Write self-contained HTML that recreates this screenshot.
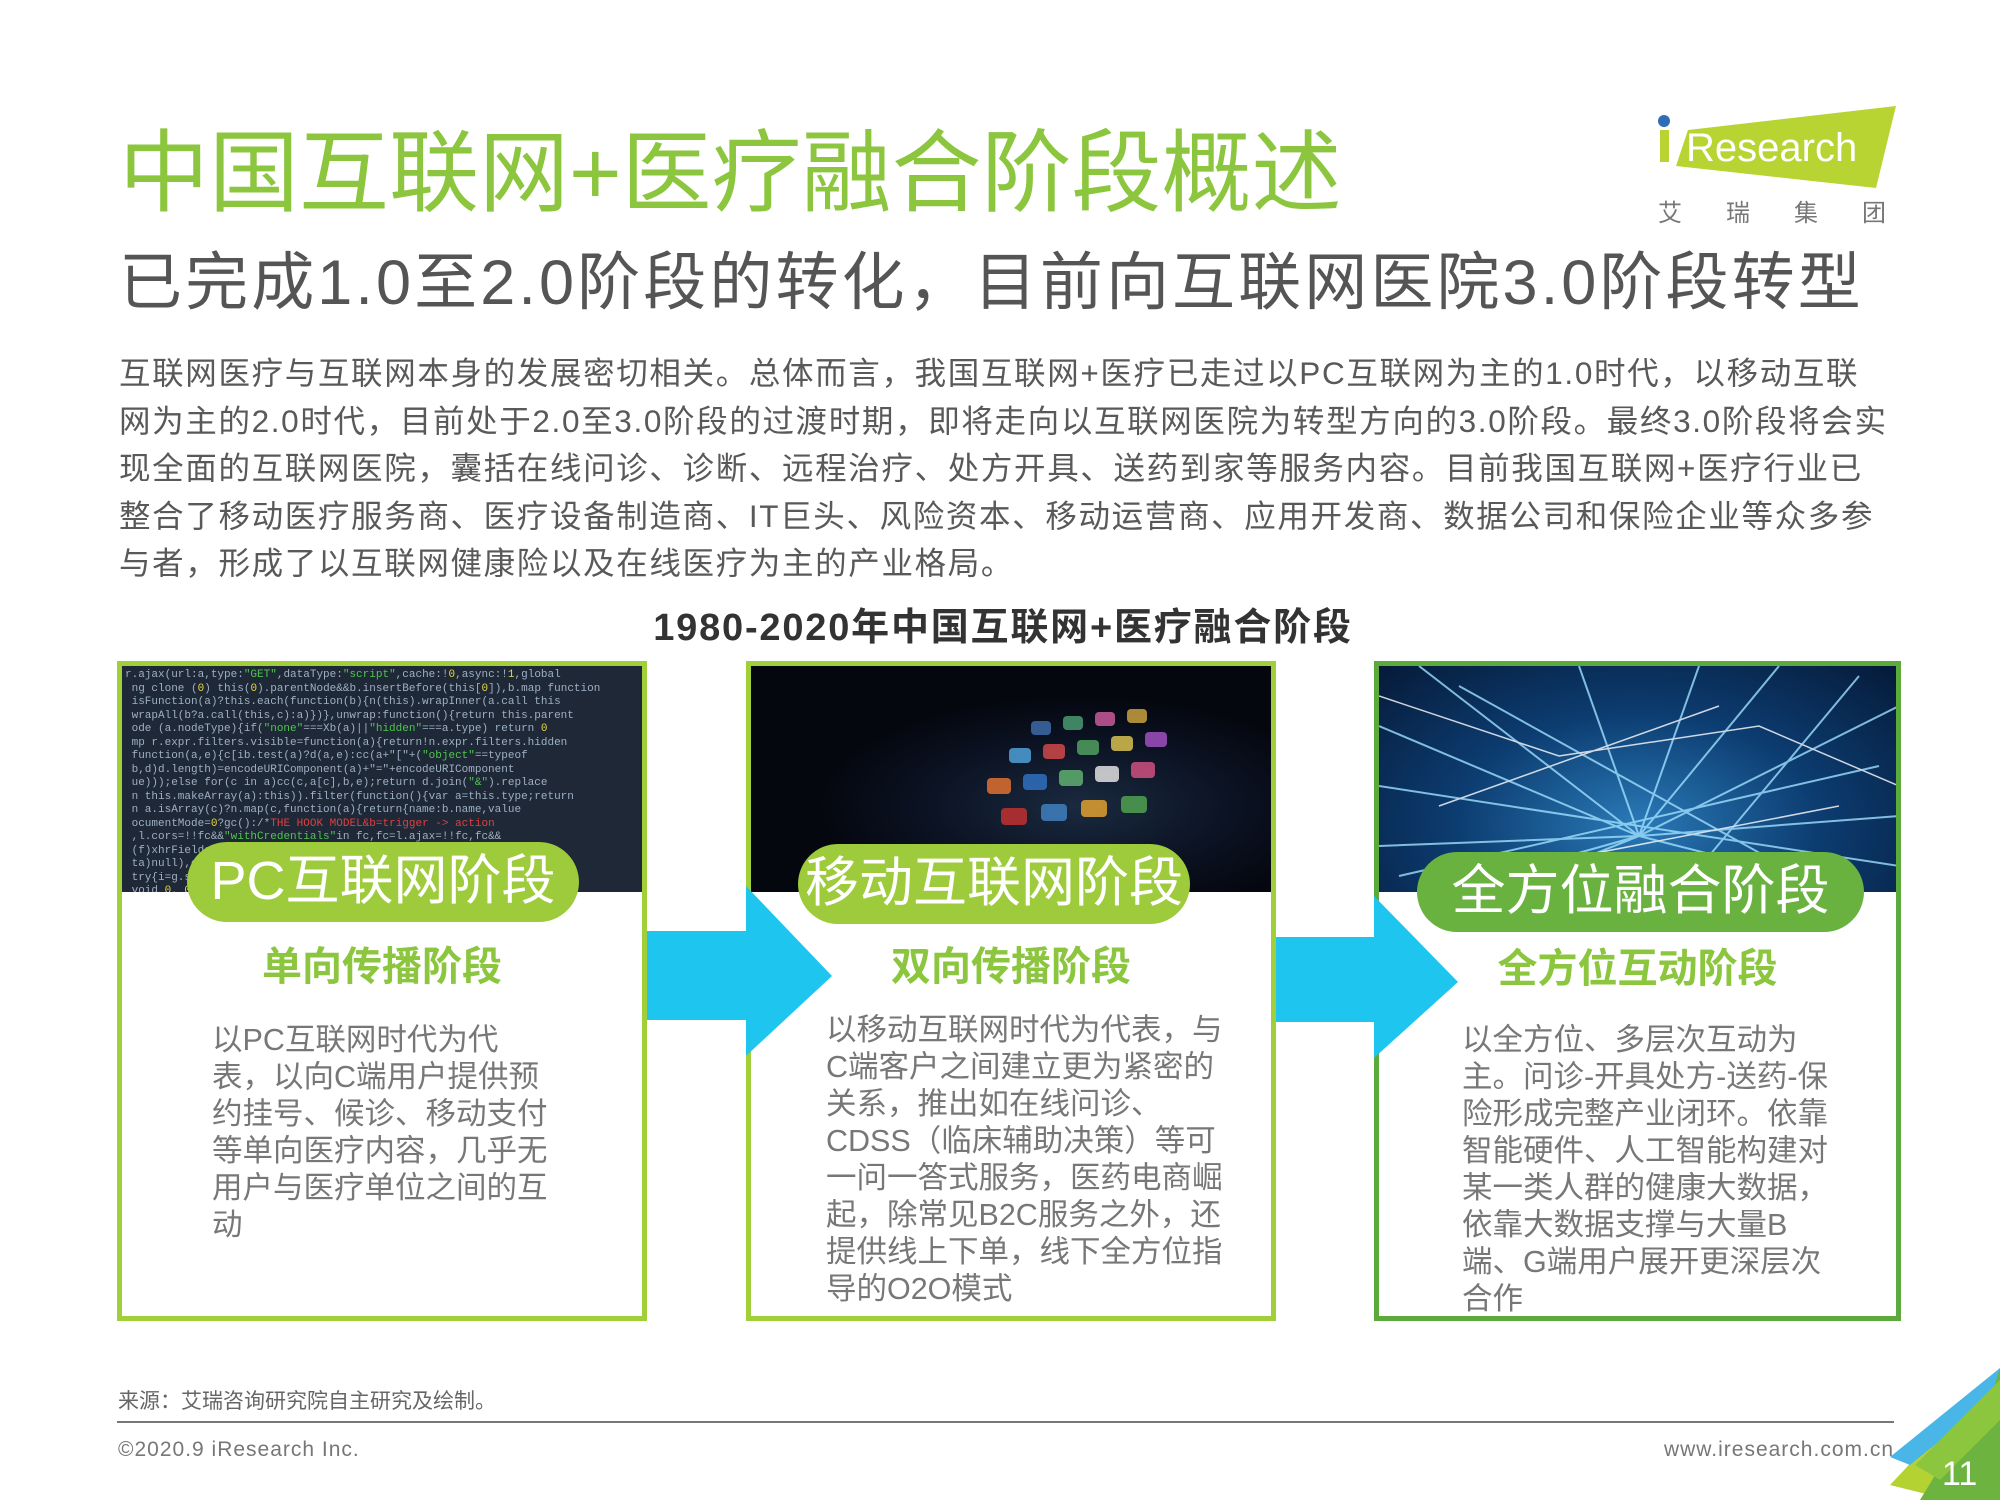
<!DOCTYPE html>
<html><head><meta charset="utf-8"><style>
*{margin:0;padding:0;box-sizing:border-box}
body{width:2000px;height:1500px;background:#fff;position:relative;overflow:hidden;font-family:"Liberation Sans","Noto Sans CJK SC",sans-serif}
.a{position:absolute;white-space:nowrap}
.t1{left:119px;top:100px;font-size:90px;color:#8cc63f;letter-spacing:0px}
.t2{left:119px;top:232px;font-size:63px;color:#555;letter-spacing:3.1px}
.p{left:119px;top:350px;font-size:31.5px;line-height:47.5px;color:#595959;white-space:normal;width:1900px;letter-spacing:1.65px}
.ct{left:0;width:2000px;top:596px;text-align:center;font-size:38px;font-weight:bold;color:#333;padding-left:6px;letter-spacing:1.8px}
.box{position:absolute;top:661px;height:660px;border:5px solid #a0cf3a;background:#fff;overflow:hidden}
.img{position:absolute;left:0;top:0;right:0;height:226px}
.pill{position:absolute;height:80px;border-radius:40px;background:#9dcb3b;color:#fff;font-size:54px;text-align:center;line-height:78px}
.sub{position:absolute;font-size:40px;font-weight:bold;color:#8cc63f;width:100%;text-align:center}
.body{position:absolute;font-size:30.5px;line-height:37px;color:#777}
.code{font-family:"Liberation Mono",monospace;font-size:11px;line-height:13.5px;color:#9fb0c4;white-space:pre;overflow:hidden;padding:3px}
.code span.g{color:#4fc54f}.code span.y{color:#e8d640}.code span.r{color:#e04040}
</style></head><body>
<div class="a t1">中国互联网+医疗融合阶段概述</div>
<div class="a t2">已完成1.0至2.0阶段的转化，目前向互联网医院3.0阶段转型</div>
<svg class="a" style="left:1650px;top:100px" width="260" height="130">
<polygon points="38,30 246,6 226,88 26,66" fill="#b8d432"/>
<rect x="10" y="30" width="9" height="32" fill="#b8d432"/>
<circle cx="14" cy="21" r="6" fill="#2f6db5"/>
<text x="36" y="61" font-family="Liberation Sans" font-size="40" fill="#fff">Research</text>
<text x="8" y="121" font-family="Noto Sans CJK SC" font-size="24" fill="#777" letter-spacing="44">艾瑞集团</text>
</svg>
<div class="a p">互联网医疗与互联网本身的发展密切相关。总体而言，我国互联网+医疗已走过以PC互联网为主的1.0时代，以移动互联<br>网为主的2.0时代，目前处于2.0至3.0阶段的过渡时期，即将走向以互联网医院为转型方向的3.0阶段。最终3.0阶段将会实<br>现全面的互联网医院，囊括在线问诊、诊断、远程治疗、处方开具、送药到家等服务内容。目前我国互联网+医疗行业已<br>整合了移动医疗服务商、医疗设备制造商、IT巨头、风险资本、移动运营商、应用开发商、数据公司和保险企业等众多参<br>与者，形成了以互联网健康险以及在线医疗为主的产业格局。</div>
<div class="a ct">1980-2020年中国互联网+医疗融合阶段</div>

<div class="box" style="left:117px;width:530px">
 <div class="img code" style="background:#1e2836">r.ajax(url:a,type:<span class="g">"GET"</span>,dataType:<span class="g">"script"</span>,cache:!<span class="y">0</span>,async:!<span class="y">1</span>,global
 ng clone (<span class="y">0</span>) this(<span class="y">0</span>).parentNode&amp;&amp;b.insertBefore(this[<span class="y">0</span>]),b.map function
 isFunction(a)?this.each(function(b){n(this).wrapInner(a.call this
 wrapAll(b?a.call(this,c):a)})},unwrap:function(){return this.parent
 ode (a.nodeType){if(<span class="g">"none"</span>===Xb(a)||<span class="g">"hidden"</span>===a.type) return <span class="y">0</span>
 mp r.expr.filters.visible=function(a){return!n.expr.filters.hidden
 function(a,e){c[ib.test(a)?d(a,e):cc(a+"["+(<span class="g">"object"</span>==typeof
 b,d)d.length)=encodeURIComponent(a)+"="+encodeURIComponent
 ue)));else for(c in a)cc(c,a[c],b,e);return d.join(<span class="g">"&amp;"</span>).replace
 n this.makeArray(a):this)).filter(function(){var a=this.type;return
 n a.isArray(c)?n.map(c,function(a){return{name:b.name,value
 ocumentMode=<span class="y">0</span>?gc():/*<span class="r">THE HOOK MODEL&amp;b=trigger -&gt; action</span>
 ,l.cors=!!fc&amp;&amp;<span class="g">"withCredentials"</span>in fc,fc=l.ajax=!!fc,fc&amp;&amp;
 (f)xhrFields[f];b.mimeType&amp;&amp;g.overrideMimeType&amp;&amp;g.readyState
 ta)null),c=function(a,d){var f,i,j;if(c&amp;&amp;(d||<span class="y">4</span>===g.readyState
 try{i=g.statusText}catch(k){i=""}f||!b.isLocal||b.crossDomain
 void <span class="y">0</span>, <span class="y">0</span>)}}}});function gc(){try{return new a.XMLHttpRequest
 script:<span class="g">"text/javascript, application/javascript, ecmascript"</span>
 ajaxPrefilter(script,function(a){a.cache&amp;&amp;(a.cache=!<span class="y">1</span>),a.crossDomain
 er function a.cache===b,a.type=<span class="g">"GET"</span>),b.script.src=a.url
 l.get(function a)(b=d.head||n(<span class="g">"head"</span>)[0]||d.documentElement</div>
 <div class="pill" style="left:65px;top:176px;width:392px">PC互联网阶段</div>
 <div class="sub" style="top:268px">单向传播阶段</div>
 <div class="body" style="left:90px;top:356px">以PC互联网时代为代<br>表，以向C端用户提供预<br>约挂号、候诊、移动支付<br>等单向医疗内容，几乎无<br>用户与医疗单位之间的互<br>动</div>
</div>

<div class="box" style="left:746px;width:530px">
 <div class="img" style="background:radial-gradient(ellipse 260px 110px at 63% 62%,#1a2a40 0%,#0b1222 60%,#05070f 100%)">
  <svg width="520" height="226">
   <g opacity=".85">
   <rect x="280" y="55" width="20" height="14" rx="4" fill="#3d6aa8"/><rect x="312" y="50" width="20" height="14" rx="4" fill="#4a9a70"/><rect x="344" y="46" width="20" height="14" rx="4" fill="#c85a9a"/><rect x="376" y="43" width="20" height="14" rx="4" fill="#c8a040"/>
   <rect x="258" y="82" width="22" height="15" rx="4" fill="#4fa0d8"/><rect x="292" y="78" width="22" height="15" rx="4" fill="#d04848"/><rect x="326" y="74" width="22" height="15" rx="4" fill="#50a060"/><rect x="360" y="70" width="22" height="15" rx="4" fill="#d8c050"/><rect x="394" y="66" width="22" height="15" rx="4" fill="#a050c0"/>
   <rect x="236" y="112" width="24" height="16" rx="4" fill="#e07030"/><rect x="272" y="108" width="24" height="16" rx="4" fill="#3070c0"/><rect x="308" y="104" width="24" height="16" rx="4" fill="#60b070"/><rect x="344" y="100" width="24" height="16" rx="4" fill="#e0e0e0"/><rect x="380" y="96" width="24" height="16" rx="4" fill="#d05080"/>
   <rect x="250" y="142" width="26" height="17" rx="4" fill="#c03030"/><rect x="290" y="138" width="26" height="17" rx="4" fill="#4080c0"/><rect x="330" y="134" width="26" height="17" rx="4" fill="#e0a030"/><rect x="370" y="130" width="26" height="17" rx="4" fill="#50a050"/>
   </g>
  </svg>
 </div>
 <div class="pill" style="left:47px;top:178px;width:392px">移动互联网阶段</div>
 <div class="sub" style="top:268px">双向传播阶段</div>
 <div class="body" style="left:75px;top:346px">以移动互联网时代为代表，与<br>C端客户之间建立更为紧密的<br>关系，推出如在线问诊、<br>CDSS（临床辅助决策）等可<br>一问一答式服务，医药电商崛<br>起，除常见B2C服务之外，还<br>提供线上下单，线下全方位指<br>导的O2O模式</div>
</div>

<div class="box" style="left:1374px;width:527px;border-color:#5daa3c">
 <div class="img" style="background:radial-gradient(ellipse at 50% 70%,#2a7ab8 0%,#0c3c70 50%,#061a38 100%)">
  <svg width="520" height="226" stroke="#9fe0ff" stroke-width="2" opacity=".8" fill="none">
   <path d="M0 60L260 170L520 40M40 0L260 170L480 226M120 226L260 170L400 0M0 180L260 170L520 150M200 0L260 170M320 0L260 170L60 226M0 120L520 200M80 20L440 220M500 100L20 210M300 226L480 10"/>
   <path d="M0 30L180 90L380 60L520 120M60 140L340 40M150 200L460 140" stroke="#fff" stroke-width="1.5"/>
  </svg>
 </div>
 <div class="pill" style="left:38px;top:186px;width:447px;background:#6ab23f">全方位融合阶段</div>
 <div class="sub" style="top:270px">全方位互动阶段</div>
 <div class="body" style="left:83px;top:356px">以全方位、多层次互动为<br>主。问诊-开具处方-送药-保<br>险形成完整产业闭环。依靠<br>智能硬件、人工智能构建对<br>某一类人群的健康大数据，<br>依靠大数据支撑与大量B<br>端、G端用户展开更深层次<br>合作</div>
</div>

<svg class="a" style="left:647px;top:880px" width="200" height="180"><polygon points="0,51 99,51 99,6 185,96 99,176 99,140 0,140" fill="#1ec6ef"/></svg>
<svg class="a" style="left:1276px;top:890px" width="200" height="180"><polygon points="0,47 98,47 98,6 182,92 98,168 98,132 0,132" fill="#1ec6ef"/></svg>

<div class="a" style="left:118px;top:1385px;font-size:21px;color:#666">来源：艾瑞咨询研究院自主研究及绘制。</div>
<div class="a" style="left:117px;top:1421px;width:1777px;height:2px;background:#777"></div>
<div class="a" style="left:118px;top:1438px;font-size:21px;color:#777;letter-spacing:1px">©2020.9 iResearch Inc.</div>
<div class="a" style="right:106px;top:1438px;font-size:21px;color:#777;letter-spacing:1px">www.iresearch.com.cn</div>
<svg class="a" style="left:1880px;top:1360px" width="120" height="140">
<polygon points="120,8 120,140 70,140 10,125" fill="#b4d232"/>
<polygon points="120,8 120,140 40,140" fill="#6cb33f"/>
<polygon points="120,8 110,40 30,105 10,97" fill="#4ab6e8"/>
<polygon points="120,20 120,60 60,120 35,105" fill="#8cc63f"/>
<text x="62" y="1" dy="124" font-family="Liberation Sans" font-size="34" fill="#fff">11</text>
</svg>
</body></html>
